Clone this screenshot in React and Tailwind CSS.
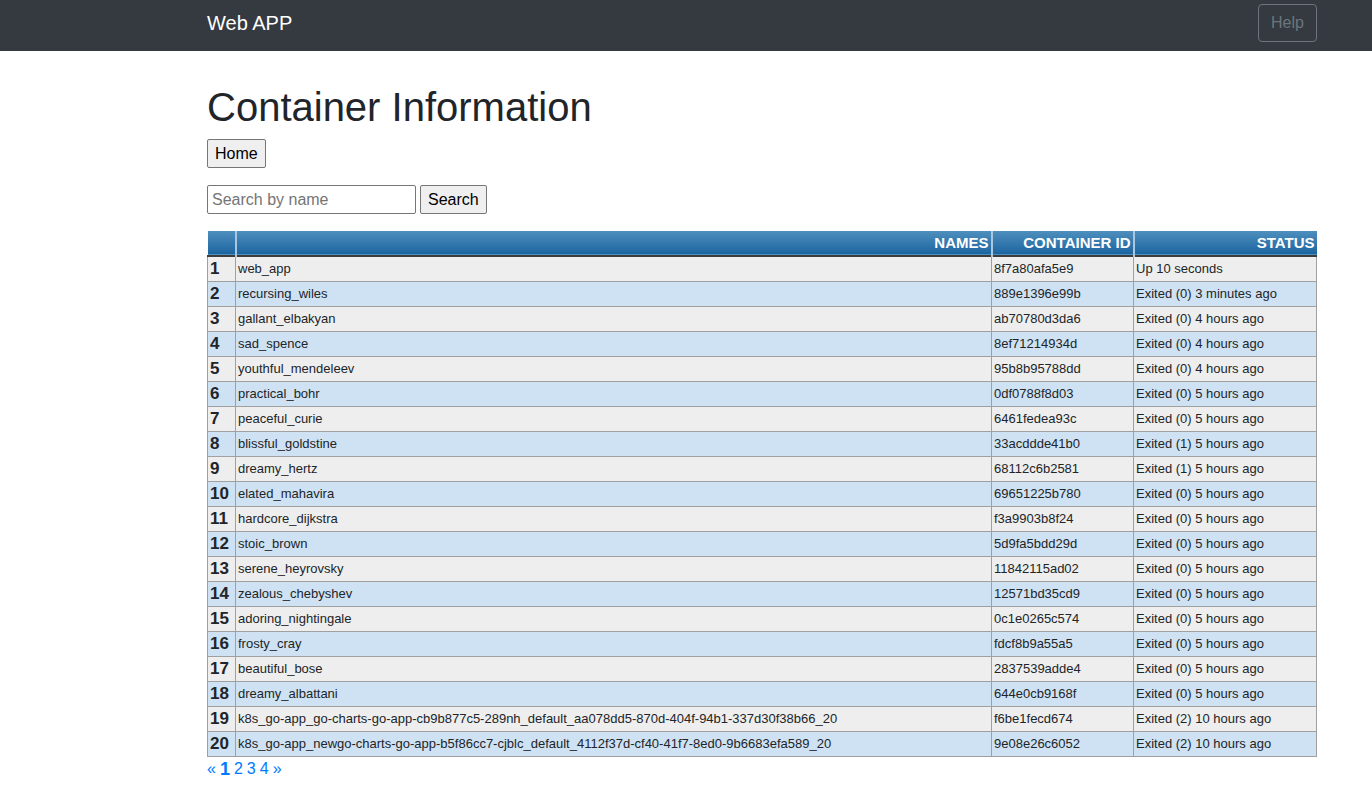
import React from 'react';

const rows = [
  ['web_app', '8f7a80afa5e9', 'Up 10 seconds'],
  ['recursing_wiles', '889e1396e99b', 'Exited (0) 3 minutes ago'],
  ['gallant_elbakyan', 'ab70780d3da6', 'Exited (0) 4 hours ago'],
  ['sad_spence', '8ef71214934d', 'Exited (0) 4 hours ago'],
  ['youthful_mendeleev', '95b8b95788dd', 'Exited (0) 4 hours ago'],
  ['practical_bohr', '0df0788f8d03', 'Exited (0) 5 hours ago'],
  ['peaceful_curie', '6461fedea93c', 'Exited (0) 5 hours ago'],
  ['blissful_goldstine', '33acddde41b0', 'Exited (1) 5 hours ago'],
  ['dreamy_hertz', '68112c6b2581', 'Exited (1) 5 hours ago'],
  ['elated_mahavira', '69651225b780', 'Exited (0) 5 hours ago'],
  ['hardcore_dijkstra', 'f3a9903b8f24', 'Exited (0) 5 hours ago'],
  ['stoic_brown', '5d9fa5bdd29d', 'Exited (0) 5 hours ago'],
  ['serene_heyrovsky', '11842115ad02', 'Exited (0) 5 hours ago'],
  ['zealous_chebyshev', '12571bd35cd9', 'Exited (0) 5 hours ago'],
  ['adoring_nightingale', '0c1e0265c574', 'Exited (0) 5 hours ago'],
  ['frosty_cray', 'fdcf8b9a55a5', 'Exited (0) 5 hours ago'],
  ['beautiful_bose', '2837539adde4', 'Exited (0) 5 hours ago'],
  ['dreamy_albattani', '644e0cb9168f', 'Exited (0) 5 hours ago'],
  ['k8s_go-app_go-charts-go-app-cb9b877c5-289nh_default_aa078dd5-870d-404f-94b1-337d30f38b66_20', 'f6be1fecd674', 'Exited (2) 10 hours ago'],
  ['k8s_go-app_newgo-charts-go-app-b5f86cc7-cjblc_default_4112f37d-cf40-41f7-8ed0-9b6683efa589_20', '9e08e26c6052', 'Exited (2) 10 hours ago'],
];

const App = () => {
  return (
    <div className="min-h-screen bg-white text-[#212529] font-['Liberation_Sans',Arial,sans-serif]">
      {/* Navbar */}
      <nav className="bg-[#343a40] h-[51px]">
        <div className="w-[1110px] ml-[207px] h-full flex items-center justify-between">
          <span className="text-white text-[20px] leading-[30px] -mt-[5px]">Web APP</span>
          <button className="border border-[#6c757d] text-[#6c757d] rounded-[4px] w-[59px] h-[38px] text-[16px] -mt-[5px]">
            Help
          </button>
        </div>
      </nav>

      <main className="w-[1110px] ml-[207px]">
        <h1 className="text-[40px] leading-[48px] mt-[32px] mb-[8px] font-medium">Container Information</h1>

        <button className="bg-[#efefef] border border-[#767676] rounded-[2px] px-[7px] h-[29px] text-[16px] text-black">
          Home
        </button>

        <form className="flex gap-[4px] mt-[17px]" onSubmit={(e) => e.preventDefault()}>
          <input
            type="text"
            placeholder="Search by name"
            className="w-[209px] h-[29px] border border-[#767676] rounded-[2px] px-[4px] text-[16px] placeholder-[#757575] outline-none"
          />
          <button className="bg-[#efefef] border border-[#767676] rounded-[2px] px-[7px] h-[29px] text-[16px] text-black">
            Search
          </button>
        </form>

        {/* Containers table */}
        <table className="mt-[17px] w-[1110px] border-collapse table-fixed text-[13px]">
          <colgroup>
            <col className="w-[28px]" />
            <col className="w-[756px]" />
            <col className="w-[142px]" />
            <col className="w-[183px]" />
          </colgroup>
          <thead>
            <tr className="h-[25px] bg-gradient-to-b from-[#4d8fbd] to-[#1a65a0] text-white text-[15px] font-bold border-b-2 border-[#3c3c3c]">
              <th className="border-r-2 border-[#a9c8df]"></th>
              <th className="text-right pr-[2px] border-r-2 border-[#a9c8df]">NAMES</th>
              <th className="text-right pr-[2px] border-r-2 border-[#a9c8df]">CONTAINER ID</th>
              <th className="text-right pr-[2px]">STATUS</th>
            </tr>
          </thead>
          <tbody>
            {rows.map((r, i) => (
              <tr key={i} className={`h-[25px] ${i % 2 === 0 ? 'bg-[#eeeeee]' : 'bg-[#cfe2f3]'}`}>
                <td className="border border-[#a0a0a0] pl-[2px] text-[17px] font-bold leading-[20px]">{i + 1}</td>
                <td className="border border-[#a0a0a0] pl-[2px] truncate">{r[0]}</td>
                <td className="border border-[#a0a0a0] pl-[2px]">{r[1]}</td>
                <td className="border border-[#a0a0a0] pl-[2px]">{r[2]}</td>
              </tr>
            ))}
          </tbody>
        </table>

        <div className="text-[16px] text-[#007bff] leading-[24px] flex gap-[4px]">
          <a href="#">«</a>
          <a href="#" className="font-bold text-[18px]">1</a>
          <a href="#">2</a>
          <a href="#">3</a>
          <a href="#">4</a>
          <a href="#">»</a>
        </div>
      </main>
    </div>
  );
};

export default App;
